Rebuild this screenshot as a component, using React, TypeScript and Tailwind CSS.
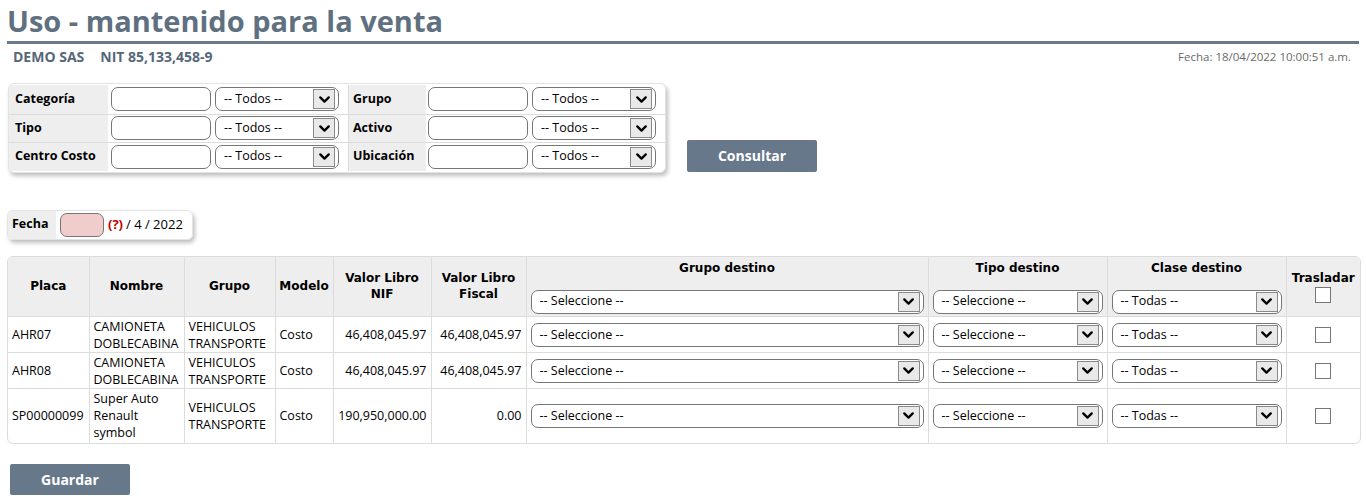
import { ChevronDown } from "lucide-react";

const sans = "font-['Open_Sans',_'Noto_Sans',_sans-serif]";
const verd = "font-['DejaVu_Sans',_Verdana,_sans-serif]";

function Select({ label, className }: { label: string; className: string }) {
  return (
    <div
      className={`flex h-[24px] items-center justify-between rounded-[7px] border border-[#767676] bg-white pl-[8px] pr-[3px] text-left text-[12.5px] font-normal text-black ${sans} ${className}`}
    >
      <span>{label}</span>
      <span className="flex h-[20px] w-[22px] items-center justify-center border border-[#8a8a8a] bg-[#e9e9e9]">
        <ChevronDown size={17} strokeWidth={3.2} className="text-black" />
      </span>
    </div>
  );
}

function TextBox({ className = "" }: { className?: string }) {
  return <div className={`h-[24px] rounded-[7px] border border-[#767676] bg-white ${className}`} />;
}

function Checkbox() {
  return <div className="h-[16px] w-[16px] border border-[#767676] bg-white" />;
}

function Button({ children, className = "" }: { children: string; className?: string }) {
  return (
    <button className={`rounded-[2px] bg-[#66788a] text-[14px] font-bold text-white ${className}`}>
      {children}
    </button>
  );
}

const filters = [
  ["Categoría", "Grupo"],
  ["Tipo", "Activo"],
  ["Centro Costo", "Ubicación"],
];

const rows = [
  { placa: "AHR07", nombre: ["CAMIONETA", "DOBLECABINA"], nif: "46,408,045.97", fiscal: "46,408,045.97", h: "h-[36px]" },
  { placa: "AHR08", nombre: ["CAMIONETA", "DOBLECABINA"], nif: "46,408,045.97", fiscal: "46,408,045.97", h: "h-[36px]" },
  { placa: "SP00000099", nombre: ["Super Auto", "Renault", "symbol"], nif: "190,950,000.00", fiscal: "0.00", h: "h-[54px]" },
];

const th = `border-r border-[#dcdcdc] font-bold text-[12px] text-black ${verd}`;
const td = "border-r border-t border-[#dcdcdc] px-[4px] leading-[17px]";

export default function App() {
  return (
    <div className={`w-[1366px] bg-white ${sans} text-[12.5px] text-black`}>
      {/* Header */}
      <div className="px-[7px] pt-[2px]">
        <h1 className="text-[29px] font-bold leading-[38px] text-[#5f7080]">Uso - mantenido para la venta</h1>
        <div className="mt-[1px] h-[3px] w-[1352px] bg-[#6b7b8a]" />
        <div className="flex items-center justify-between pl-[6px] pr-[8px] pt-[2px]">
          <div className="text-[14px] font-bold text-[#56677a]">
            DEMO SAS<span className="ml-[16px]">NIT 85,133,458-9</span>
          </div>
          <div className="text-[11.5px] text-[#6a6a6a]">Fecha: 18/04/2022 10:00:51 a.m.</div>
        </div>
      </div>

      {/* Filters */}
      <div className="mt-[16px] flex items-end pl-[8px]">
        <div className="rounded-[6px] border border-[#e4e4e4] bg-white py-[1px] shadow-[2px_3px_4px_rgba(0,0,0,0.25)]">
          {filters.map((f, i) => (
            <div
              key={f[0]}
              className={`flex h-[28.5px] items-center ${i > 0 ? "border-t border-[#dcdcdc]" : ""}`}
            >
              <div className="flex h-full w-[99px] items-center bg-[#eeeeee] pl-[6px] text-[12.5px] font-bold">
                {f[0]}
              </div>
              <TextBox className="ml-[3px] w-[100px]" />
              <Select label="-- Todos --" className="ml-[4px] w-[124px]" />
              <div className="ml-[9px] flex h-full w-[78px] items-center border-l border-[#dcdcdc] bg-[#eeeeee] pl-[4px] text-[12.5px] font-bold">
                {f[1]}
              </div>
              <TextBox className="ml-[2px] w-[100px]" />
              <Select label="-- Todos --" className="ml-[4px] mr-[9px] w-[124px]" />
            </div>
          ))}
        </div>
        <Button className="mb-[1px] ml-[21px] h-[32px] w-[130px]">Consultar</Button>
      </div>

      {/* Fecha */}
      <div className="ml-[7px] mt-[37px] flex h-[30px] w-[186px] items-center rounded-[6px] border border-[#e4e4e4] shadow-[2px_3px_4px_rgba(0,0,0,0.25)]">
        <div className="flex h-full w-[48px] items-center bg-[#eeeeee] pl-[4px] text-[12.5px] font-bold">Fecha</div>
        <div className="ml-[4px] h-[24px] w-[44px] rounded-[7px] border border-[#767676] bg-[#f0cccc]" />
        <span className="ml-[4px] text-[13px] font-bold text-[#c00000]">(?)</span>
        <span className="ml-[3px] text-[13px]">/ 4 / 2022</span>
      </div>

      {/* Table */}
      <div className="ml-[7px] mt-[16px] w-[1354px] overflow-hidden rounded-[6px] border border-[#dcdcdc]">
        <table className="w-full border-collapse">
          <thead>
            <tr className="h-[60px] bg-[#eeeeee] text-center">
              <th className={`${th} w-[81px]`}>Placa</th>
              <th className={`${th} w-[95px]`}>Nombre</th>
              <th className={`${th} w-[91px]`}>Grupo</th>
              <th className={`${th} w-[58px]`}>Modelo</th>
              <th className={`${th} w-[98px] leading-[16px]`}>Valor Libro<br />NIF</th>
              <th className={`${th} w-[95px] leading-[16px]`}>Valor Libro<br />Fiscal</th>
              <th className={`${th} w-[402px] px-[4px] align-top`}>
                <div className="pt-[2px]">Grupo destino</div>
                <Select label="-- Seleccione --" className="mt-[13px] w-full" />
              </th>
              <th className={`${th} w-[179px] px-[4px] align-top`}>
                <div className="pt-[2px]">Tipo destino</div>
                <Select label="-- Seleccione --" className="mt-[13px] w-full" />
              </th>
              <th className={`${th} w-[179px] px-[4px] align-top`}>
                <div className="pt-[2px]">Clase destino</div>
                <Select label="-- Todas --" className="mt-[13px] w-full" />
              </th>
              <th className={`font-bold text-[12px] ${verd}`}>
                <div className="pt-[6px]">Trasladar</div>
                <div className="flex justify-center pb-[6px]">
                  <Checkbox />
                </div>
              </th>
            </tr>
          </thead>
          <tbody>
            {rows.map((r) => (
              <tr key={r.placa} className={r.h}>
                <td className={td}>{r.placa}</td>
                <td className={td}>
                  {r.nombre.map((n) => (
                    <div key={n}>{n}</div>
                  ))}
                </td>
                <td className={td}>
                  <div>VEHICULOS</div>
                  <div>TRANSPORTE</div>
                </td>
                <td className={td}>Costo</td>
                <td className={`${td} text-right`}>{r.nif}</td>
                <td className={`${td} text-right`}>{r.fiscal}</td>
                <td className={td}>
                  <Select label="-- Seleccione --" className="w-full" />
                </td>
                <td className={td}>
                  <Select label="-- Seleccione --" className="w-full" />
                </td>
                <td className={td}>
                  <Select label="-- Todas --" className="w-full" />
                </td>
                <td className="border-t border-[#dcdcdc]">
                  <div className="flex justify-center">
                    <Checkbox />
                  </div>
                </td>
              </tr>
            ))}
          </tbody>
        </table>
      </div>

      <Button className="ml-[10px] mt-[20px] h-[31px] w-[120px]">Guardar</Button>
    </div>
  );
}
